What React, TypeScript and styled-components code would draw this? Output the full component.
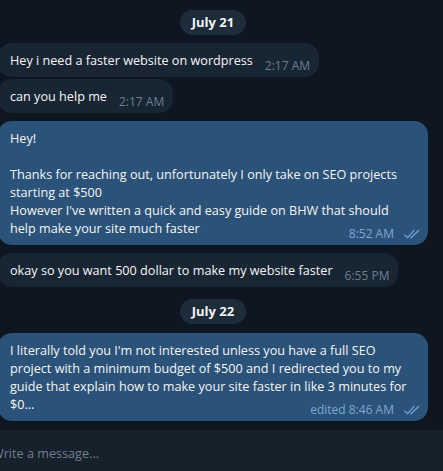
import React from "react";
import styled, { createGlobalStyle } from "styled-components";

const Global = createGlobalStyle`
  html, body { margin: 0; padding: 0; background: #0e1621; }
  body { width: 443px; height: 471px; overflow: hidden; font-family: "Open Sans", "Noto Sans", sans-serif; }
  * { box-sizing: border-box; }
`;

const Screen = styled.div`
  width: 443px;
  height: 471px;
  display: flex;
  flex-direction: column;
  background: #0e1621;
  overflow: hidden;
`;

const History = styled.div`
  flex: 1;
  display: flex;
  flex-direction: column;
  align-items: flex-start;
  width: 430px;
  margin-left: -2px;
  padding-top: 10px;
`;

const DatePill = styled.div<{ $top: number }>`
  align-self: center;
  margin-top: ${(p) => p.$top}px;
  height: 25px;
  padding: 0 12px;
  border-radius: 13px;
  background: #1e2c3a;
  color: #f5f5f5;
  font-weight: 700;
  font-size: 13px;
  line-height: 25px;
`;

const Bubble = styled.div<{ $out?: boolean; $gap: number }>`
  max-width: 100%;
  margin-top: ${(p) => p.$gap}px;
  padding: 8px 12px 2px 12px;
  border-radius: 14px;
  background: ${(p) => (p.$out ? "#2b5278" : "#182533")};
  color: #f5f5f5;
  font-size: 12.65px;
  line-height: 18px;
  white-space: pre-wrap;
  display: flow-root;
`;

const Meta = styled.span<{ $out?: boolean }>`
  float: right;
  display: inline-flex;
  align-items: center;
  gap: 10px;
  margin-top: 6px;
  margin-left: 12px;
  margin-right: ${(p) => (p.$out ? -5 : -3)}px;
  line-height: 18px;
  font-size: 12px;
  color: ${(p) => (p.$out ? "#7da8d3" : "#6d7f8f")};
  white-space: nowrap;
`;

const Composer = styled.div`
  height: 41px;
  background: #17212b;
  display: flex;
  align-items: center;
`;

const Placeholder = styled.span`
  margin-left: -8px;
  margin-top: 4px;
  color: #6d7f8f;
  font-size: 12.65px;
  line-height: 18px;
`;

const Checks = () => (
  <svg width="17" height="10" viewBox="0 0 17 10" fill="none" stroke="#6fa3d8" strokeWidth="1.4" strokeLinecap="round" strokeLinejoin="round">
    <path d="M1 6.2 L3.6 8.6 L10 1.4" />
    <path d="M6.6 8.6 L7.2 8.6 L14.6 1.4" />
  </svg>
);

type Msg = { text: string; time: string; out?: boolean; gap: number };

const Message = ({ text, time, out, gap }: Msg) => (
  <Bubble $out={out} $gap={gap}>
    {text}
    <Meta $out={out}>
      {time}
      {out && <Checks />}
    </Meta>
  </Bubble>
);

export default function App() {
  return (
    <Screen>
      <Global />
      <History>
        <DatePill $top={0}>July 21</DatePill>
        <Message gap={8} text="Hey i need a faster website on wordpress" time="2:17 AM" />
        <Message gap={2} text="can you help me" time="2:17 AM" />
        <Message
          gap={8}
          out
          text={"Hey!\n\nThanks for reaching out, unfortunately I only take on SEO projects starting at $500\nHowever I've written a quick and easy guide on BHW that should help make your site much faster"}
          time="8:52 AM"
        />
        <Message gap={8} text="okay so you want 500 dollar to make my website faster" time="6:55 PM" />
        <DatePill $top={12}>July 22</DatePill>
        <Message
          gap={9}
          out
          text="I literally told you I'm not interested unless you have a full SEO project with a minimum budget of $500 and I redirected you to my guide that explain how to make your site faster in like 3 minutes for $0..."
          time="edited 8:46 AM"
        />
      </History>
      <Composer>
        <Placeholder>Write a message...</Placeholder>
      </Composer>
    </Screen>
  );
}
